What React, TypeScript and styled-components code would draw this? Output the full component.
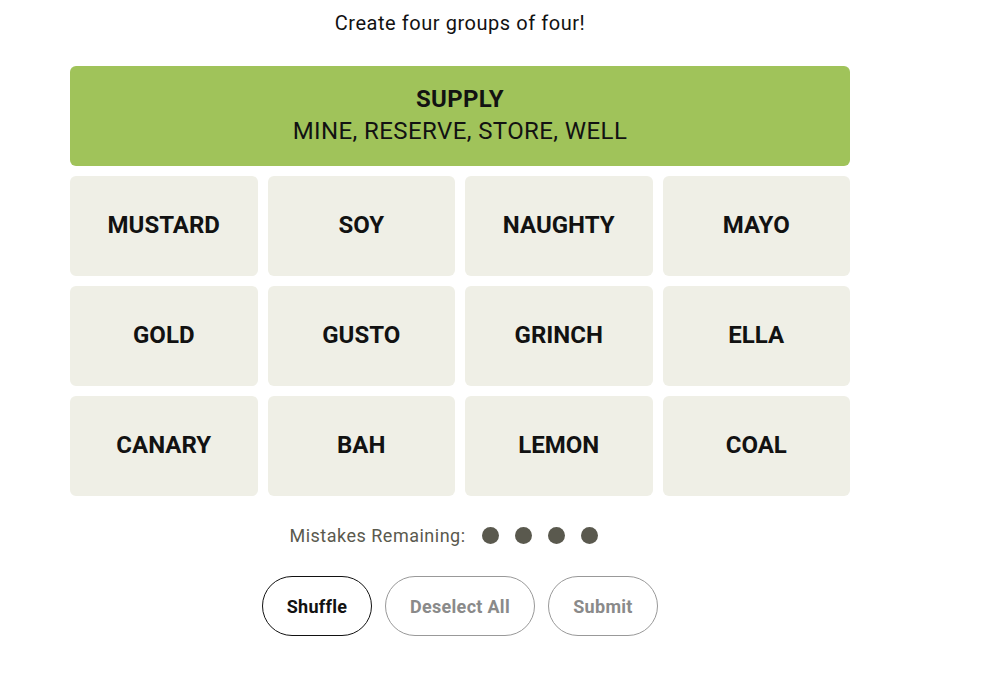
import React from "react";
import styled, { createGlobalStyle } from "styled-components";

const Global = createGlobalStyle`
  html, body { margin: 0; padding: 0; background: #ffffff; }
  body { font-family: Roboto, "Liberation Sans", sans-serif; color: #121212; }
`;

const Page = styled.div`
  width: 780px;
  padding-left: 70px;
  display: flex;
  flex-direction: column;
  align-items: center;
`;

const Title = styled.h1`
  margin: 10px 0 0;
  height: 34px;
  font-size: 20px;
  font-weight: 400;
  line-height: 26px;
  letter-spacing: 0.55px;
`;

const Board = styled.div`
  margin-top: 22px;
  width: 100%;
  display: grid;
  grid-template-columns: repeat(4, 1fr);
  gap: 10px;
`;

const Solved = styled.div`
  grid-column: 1 / -1;
  height: 100px;
  border-radius: 6px;
  background: #a0c35a;
  display: flex;
  flex-direction: column;
  align-items: center;
  justify-content: center;
  text-transform: uppercase;
  font-size: 24px;
  line-height: 32px;
  padding-bottom: 3px;
  box-sizing: border-box;
`;

const GroupName = styled.div`
  font-weight: 700;
  letter-spacing: 0.3px;
`;

const GroupMembers = styled.div`
  font-weight: 400;
  letter-spacing: 0.4px;
`;

const Tile = styled.button`
  height: 100px;
  border: none;
  border-radius: 6px;
  background: #efefe6;
  color: #121212;
  font-family: inherit;
  font-size: 24px;
  font-weight: 700;
  text-transform: uppercase;
  padding: 0 0 2px;
  cursor: pointer;
`;

const Mistakes = styled.div`
  margin-top: 29px;
  padding-right: 33px;
  display: flex;
  align-items: center;
  gap: 16px;
  color: #5a594e;
  font-size: 18px;
  letter-spacing: 0.5px;
`;

const Dots = styled.div`
  display: flex;
  gap: 16px;
`;

const Dot = styled.span`
  width: 17px;
  height: 17px;
  border-radius: 50%;
  background: #5a594e;
`;

const Controls = styled.div`
  margin-top: 30px;
  display: flex;
  gap: 13px;
`;

const Pill = styled.button<{ $active?: boolean; $w: number }>`
  width: ${(p) => p.$w}px;
  height: 60px;
  border-radius: 30px;
  background: #ffffff;
  border: 1px solid ${(p) => (p.$active ? "#121212" : "#999999")};
  color: ${(p) => (p.$active ? "#121212" : "#8a8a8a")};
  font-family: inherit;
  font-size: 18px;
  font-weight: 700;
  letter-spacing: 0.3px;
  cursor: pointer;
`;

const words = [
  "MUSTARD", "SOY", "NAUGHTY", "MAYO",
  "GOLD", "GUSTO", "GRINCH", "ELLA",
  "CANARY", "BAH", "LEMON", "COAL",
];

export default function App() {
  return (
    <>
      <Global />
      <Page>
        <Title>Create four groups of four!</Title>
        <Board>
          <Solved>
            <GroupName>SUPPLY</GroupName>
            <GroupMembers>MINE, RESERVE, STORE, WELL</GroupMembers>
          </Solved>
          {words.map((w) => (
            <Tile key={w}>{w}</Tile>
          ))}
        </Board>
        <Mistakes>
          Mistakes Remaining:
          <Dots>
            <Dot />
            <Dot />
            <Dot />
            <Dot />
          </Dots>
        </Mistakes>
        <Controls>
          <Pill $active $w={110}>Shuffle</Pill>
          <Pill $w={150}>Deselect All</Pill>
          <Pill $w={110}>Submit</Pill>
        </Controls>
      </Page>
    </>
  );
}
